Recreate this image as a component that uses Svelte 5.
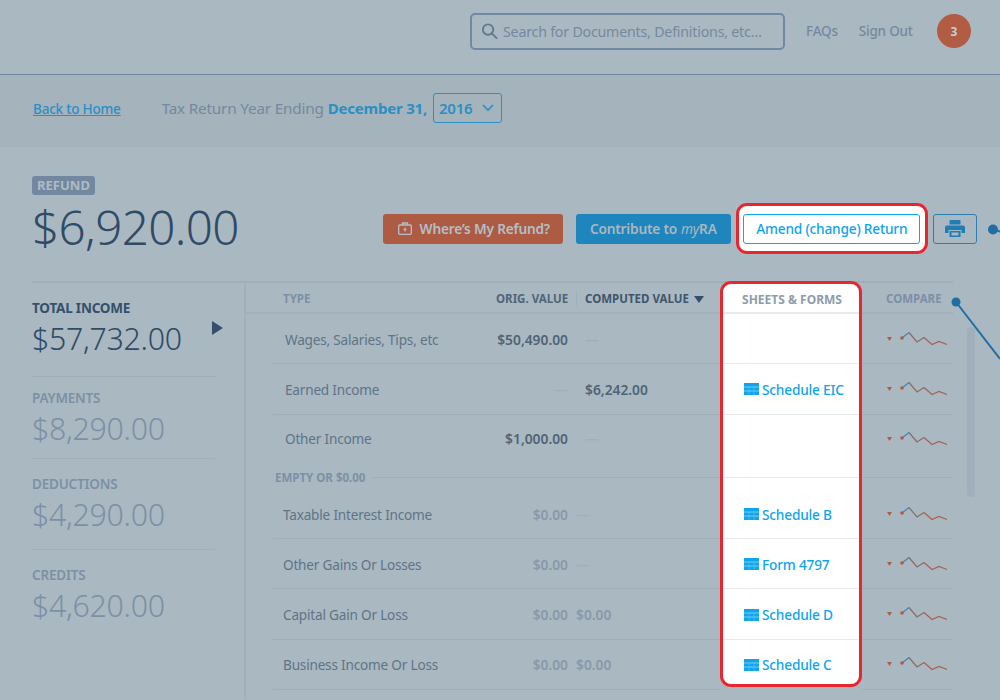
<script lang="ts">
  type Row = { name: string; orig: string; computed: string; sheet: string; muted?: boolean };

  const top: Row[] = [
    { name: 'Wages, Salaries, Tips, etc', orig: '$50,490.00', computed: '—', sheet: '' },
    { name: 'Earned Income', orig: '—', computed: '$6,242.00', sheet: 'Schedule EIC' },
    { name: 'Other Income', orig: '$1,000.00', computed: '—', sheet: '' }
  ];
  const empty: Row[] = [
    { name: 'Taxable Interest Income', orig: '$0.00', computed: '—', sheet: 'Schedule B', muted: true },
    { name: 'Other Gains Or Losses', orig: '$0.00', computed: '—', sheet: 'Form 4797', muted: true },
    { name: 'Capital Gain Or Loss', orig: '$0.00', computed: '$0.00', sheet: 'Schedule D', muted: true },
    { name: 'Business Income Or Loss', orig: '$0.00', computed: '$0.00', sheet: 'Schedule C', muted: true }
  ];
  const stats = [
    { label: 'TOTAL INCOME', value: '$57,732.00' },
    { label: 'PAYMENTS', value: '$8,290.00' },
    { label: 'DEDUCTIONS', value: '$4,290.00' },
    { label: 'CREDITS', value: '$4,620.00' }
  ];
</script>

{#snippet sparkline()}
  <svg class="spark" width="64" height="18" viewBox="0 0 64 18" fill="none">
    <path d="M1 7h5l-2.500 4z" fill="#b05c42" />
    <path d="M16 8l7-5.500" stroke="#3f86b4" stroke-width="1.200" />
    <path d="M23 2.500l8 9.500 7-4.500" stroke="#8a6a68" stroke-width="1.200" />
    <path d="M38 7.500l8 7 7-3 8 3" stroke="#a9614e" stroke-width="1.200" />
    <circle cx="16" cy="8" r="1.800" fill="#b05c42" />
  </svg>
{/snippet}

{#snippet tableIcon()}
  <svg class="grid-icon" width="15" height="12" viewBox="0 0 15 12">
    <path d="M0 0h15v12H0z" fill="#0ea5ec" />
    <path d="M0 4h15M0 8h15" stroke="#a5def9" stroke-width="0.700" />
    <path d="M5 4v8M10 4v8" stroke="#6cc8f5" stroke-width="0.500" />
  </svg>
{/snippet}

<div class="page">
  <header class="topbar">
    <div class="search">
      <svg width="17" height="18" viewBox="0 0 18 18" fill="none" stroke="#62798f" stroke-width="2">
        <circle cx="7.500" cy="7.500" r="5.500" />
        <path d="M11.500 11.500l5 5" stroke-linecap="round" />
      </svg>
      <span>Search for Documents, Definitions, etc…</span>
    </div>
    <a class="nav faq" href="#faq">FAQs</a>
    <a class="nav" href="#out">Sign Out</a>
    <span class="badge">3</span>
  </header>

  <div class="subbar">
    <a class="back" href="#home">Back to Home</a>
    <span class="year-label">Tax Return Year Ending</span>
    <strong class="year-date">December 31,</strong>
    <span class="year-select">
      2016
      <svg width="12" height="8" viewBox="0 0 12 8" fill="none" stroke="#2a8fc4" stroke-width="1.600">
        <path d="M1 1l5 5 5-5" />
      </svg>
    </span>
  </div>

  <main class="content">
    <section class="hero">
      <div class="refund">
        <span class="tag">REFUND</span>
        <div class="amount">$6,920.00</div>
      </div>
      <div class="actions">
        <button type="button" class="btn orange">
          <svg width="14" height="13" viewBox="0 0 14 13" fill="none" stroke="#b3bfc8" stroke-width="1.300">
            <rect x="0.700" y="3" width="12.600" height="9.300" rx="1" />
            <path d="M4.500 3V1h5v2" />
            <path d="M5.500 7.500h3M7 5.500v4" stroke-width="1.200" />
          </svg>
          Where’s My Refund?
        </button>
        <button type="button" class="btn blue">Contribute to <i>my</i>RA</button>
        <div class="spot-btn">
          <button type="button" class="btn amend">Amend (change) Return</button>
        </div>
        <button type="button" class="btn print" aria-label="Print">
          <svg width="20" height="17" viewBox="0 0 20 17">
            <path d="M5.500 0h9a1 1 0 0 1 1 1v3.500h-11V1a1 1 0 0 1 1-1z" fill="#1f7fb5" />
            <path d="M2 5.500h16a2 2 0 0 1 2 2V13h-3.500V10h-13v3H0V7.500a2 2 0 0 1 2-2z" fill="#1f7fb5" />
            <path d="M4.500 11h11v6h-11z" fill="#1f7fb5" />
            <path d="M6.500 12.500h7v3h-7z" fill="#aab8c2" />
          </svg>
        </button>
      </div>
    </section>

    <section class="body">
      <aside class="stats">
        {#each stats as s, i}
          <div class="stat" class:active={i === 0}>
            <div class="stat-label">{s.label}</div>
            <div class="stat-value">{s.value}</div>
            {#if i === 0}<span class="arrow"></span>{/if}
          </div>
        {/each}
      </aside>

      <div class="table">
        <div class="col main-col">
          <div class="head head-main">
            <span class="th-type">TYPE</span>
            <span class="th-orig">ORIG. VALUE</span>
            <span class="th-comp">COMPUTED VALUE <span class="caret"></span></span>
          </div>
          {#each top as r, i}
            <div class="row data" class:last={i === 2}>
              <span class="type">{r.name}</span>
              <span class="orig" class:dash={r.orig === '—'}>{r.orig}</span>
              <span class="comp" class:dash={r.computed === '—'}>{r.computed}</span>
            </div>
          {/each}
          <div class="group"><span>EMPTY OR $0.00</span></div>
          {#each empty as r}
            <div class="row data muted">
              <span class="type">{r.name}</span>
              <span class="orig">{r.orig}</span>
              <span class="comp" class:dash={r.computed === '—'}>{r.computed}</span>
            </div>
          {/each}
        </div>

        <div class="col sheets">
          <div class="head head-sheets">SHEETS &amp; FORMS</div>
          {#each top as r, i}
            <div class="row sheet" class:last={i === 2}>
              {#if r.sheet}{@render tableIcon()}<a href="#s">{r.sheet}</a>{/if}
            </div>
          {/each}
          <div class="group-gap"></div>
          {#each empty as r}
            <div class="row sheet">{@render tableIcon()}<a href="#s">{r.sheet}</a></div>
          {/each}
        </div>

        <div class="col compare">
          <div class="head head-compare">COMPARE</div>
          {#each top as r, i}
            <div class="row cmp" class:last={i === 2}>{@render sparkline()}</div>
          {/each}
          <div class="group-gap"></div>
          {#each empty as r}
            <div class="row cmp">{@render sparkline()}</div>
          {/each}
        </div>
      </div>
    </section>
  </main>

  <div class="scrollbar"></div>
  <svg class="callouts" width="1000" height="700" viewBox="0 0 1000 700" fill="none">
    <circle cx="993" cy="229.500" r="5" fill="#1f6fa3" />
    <path d="M993 229.500l7 2" stroke="#1f6fa3" stroke-width="2" />
    <circle cx="956" cy="302" r="4.500" fill="#1f6fa3" />
    <path d="M956 302l44 57" stroke="#1f6fa3" stroke-width="2" />
  </svg>
</div>

<style>
  :global(body) {
    margin: 0;
    background: #aab8c2;
  }
  .page {
    position: relative;
    width: 1000px;
    height: 700px;
    overflow: hidden;
    background: #aab8c2;
    font-family: "Noto Sans", "Open Sans", sans-serif;
    letter-spacing: -0.2px;
    color: #5f7486;
  }
  a {
    text-decoration: none;
  }

  .topbar {
    box-sizing: border-box;
    height: 75px;
    display: flex;
    align-items: center;
    padding: 0 29px 12px 470px;
    border-bottom: 1px solid #6f879c;
  }
  .search {
    box-sizing: border-box;
    width: 315px;
    height: 37px;
    display: flex;
    align-items: center;
    gap: 5px;
    padding-left: 9px;
    border: 2px solid #7189a0;
    border-radius: 5px;
    font-size: 14.200px;
    color: #7489a0;
  }
  .nav {
    font-size: 13.500px;
    font-weight: 500;
    color: #7489a0;
    margin-left: 21px;
  }
  .nav:not(.faq) {
    margin-right: 24px;
  }
  .badge {
    width: 34px;
    height: 34px;
    border-radius: 50%;
    background: #b25c43;
    color: #c4ced5;
    font-size: 12px;
    font-weight: 700;
    display: flex;
    align-items: center;
    justify-content: center;
  }

  .subbar {
    box-sizing: border-box;
    height: 72px;
    display: flex;
    align-items: center;
    padding: 0 0 5px 33px;
    background: #a5b3bc;
    border-bottom: 1px solid #9fb0bd;
  }
  .back {
    font-size: 13.500px;
    font-weight: 500;
    color: #2a8fc4;
    text-decoration: underline;
    margin: 2px 41px 0 0;
  }
  .year-label {
    font-size: 15.300px;
    color: #7489a0;
    margin-right: 4px;
  }
  .year-date {
    font-size: 15px;
    font-weight: 700;
    color: #2a8fc4;
    margin-right: 6px;
  }
  .year-select {
    box-sizing: border-box;
    width: 69px;
    height: 30px;
    display: inline-flex;
    align-items: center;
    gap: 9px;
    padding-left: 5px;
    border: 1px solid #2a8fc4;
    border-radius: 3px;
    font-size: 15px;
    font-weight: 600;
    color: #2a8fc4;
  }

  .content {
    padding: 29px 0 0 32px;
  }
  .hero {
    height: 105px;
    display: flex;
    align-items: flex-start;
  }
  .tag {
    display: block;
    box-sizing: border-box;
    width: 63px;
    height: 19px;
    line-height: 18px;
    text-align: center;
    background: #7288a0;
    color: #aebbc5;
    border-radius: 3px;
    font-size: 13px;
    font-weight: 700;
    letter-spacing: 0;
  }
  .amount {
    font-size: 47.500px;
    font-weight: 300;
    line-height: 64px;
    letter-spacing: -0.600px;
    color: #2f4b65;
  }
  .actions {
    margin: 27px 0 0 144px;
    display: flex;
    align-items: center;
  }
  .btn {
    box-sizing: border-box;
    height: 30px;
    border: 0;
    border-radius: 3px;
    padding: 0;
    font-family: inherit;
    font-size: 13.700px;
    font-weight: 600;
    letter-spacing: -0.2px;
    display: flex;
    align-items: center;
    justify-content: center;
    gap: 7px;
  }
  .orange {
    width: 180px;
    padding-left: 2px;
    gap: 8px;
    background: #ad5c43;
    color: #b3bfc8;
  }
  .blue {
    width: 155px;
    margin-left: 13px;
    gap: 4px;
    background: #1f86bd;
    color: #a9b7c1;
  }
  .blue i {
    font-weight: 400;
    margin-right: -4px;
  }
  .spot-btn {
    box-sizing: border-box;
    width: 192px;
    height: 51px;
    margin-left: 5px;
    display: flex;
    align-items: center;
    justify-content: center;
    background: #fff;
    border: 3px solid #e8262d;
    border-radius: 11px;
  }
  .amend {
    width: 177px;
    background: #fff;
    color: #0ea5ec;
    border: 1px solid #0ea5ec;
    font-weight: 500;
  }
  .print {
    width: 44px;
    margin-left: 5px;
    background: transparent;
    border: 1px solid #2a7fb0;
  }

  .body {
    display: flex;
    height: 418px;
    width: 921px;
    border-top: 2px solid #9fb0bd;
    box-sizing: border-box;
  }
  .stats {
    box-sizing: border-box;
    width: 214px;
    padding-right: 29px;
    border-right: 2px solid #a0b1be;
  }
  .stat {
    position: relative;
    padding: 16px 0;
    border-bottom: 1px solid #9fb0bd;
  }
  .stat:nth-child(2) {
    padding-top: 12px;
    padding-bottom: 8px;
  }
  .stat:nth-child(3) {
    padding-bottom: 13px;
  }
  .stat:last-child {
    border-bottom: 0;
  }
  .stat-label {
    font-size: 13.500px;
    font-weight: 600;
    line-height: 19px;
    color: #7c90a5;
  }
  .stat-value {
    font-size: 30.300px;
    font-weight: 300;
    line-height: 42px;
    letter-spacing: -0.300px;
    color: #7c90a5;
  }
  .active .stat-label {
    font-weight: 700;
    color: #34506a;
  }
  .active .stat-value {
    color: #2f4b65;
  }
  .arrow {
    position: absolute;
    right: -8px;
    top: 38px;
    border-left: 11px solid #34506a;
    border-top: 7px solid transparent;
    border-bottom: 7px solid transparent;
  }

  .table {
    display: flex;
    flex: 1;
  }
  .col {
    flex: none;
  }
  .main-col {
    width: 474px;
  }
  .sheets {
    position: relative;
    z-index: 1;
    box-sizing: border-box;
    width: 142px;
    height: 406px;
    margin-top: -2px;
    overflow: hidden;
    background: #fff;
    border: 3px solid #e8262d;
    border-radius: 11px;
  }
  .compare {
    width: 91px;
  }
  .head {
    box-sizing: border-box;
    height: 31px;
    padding-top: 2px;
    font-size: 11.500px;
    font-weight: 700;
    letter-spacing: 0;
    border-bottom: 2px solid #a0b1be;
    display: flex;
    align-items: center;
  }
  .th-type {
    margin-left: 37px;
    width: 213px;
    color: #7c90a5;
  }
  .th-orig {
    width: 72px;
    text-align: right;
    white-space: nowrap;
    color: #506678;
    padding-right: 8px;
    border-right: 1px solid #9fb0bd;
  }
  .th-comp {
    margin-left: 8px;
    white-space: nowrap;
    color: #3f566b;
  }
  .caret {
    display: inline-block;
    margin-left: 2px;
    border-top: 7px solid #34506a;
    border-left: 5px solid transparent;
    border-right: 5px solid transparent;
  }
  .head-sheets {
    height: 30px;
    padding-left: 2px;
    justify-content: center;
    font-size: 12px;
    color: #8c9cac;
    border-bottom-color: #e6ebef;
  }
  .head-compare {
    padding-left: 24px;
    color: #7c90a5;
  }

  .row {
    box-sizing: border-box;
    height: 50.300px;
    border-bottom: 1px solid #9fb0bd;
  }
  .row.last {
    border-bottom-color: transparent;
  }
  .data {
    margin-left: 27px;
    display: grid;
    grid-template-columns: 1fr 100px 152px;
    align-items: center;
    font-size: 13.600px;
    padding-top: 2px;
  }
  .data.last {
    padding: 0 0 1px;
  }
  .data.muted {
    padding-top: 1px;
  }
  .type {
    padding-left: 12px;
  }
  .muted .type {
    padding-left: 10px;
  }
  .orig,
  .comp {
    font-size: 13.800px;
    font-weight: 600;
    letter-spacing: 0;
    color: #4f6475;
  }
  .orig {
    text-align: right;
  }
  .comp {
    padding-left: 17px;
  }
  .muted .orig,
  .muted .comp {
    color: #8799a9;
  }
  .muted .comp {
    padding-left: 8px;
  }
  .data .dash,
  .muted .dash {
    font-weight: 400;
    color: #9fb0bd;
  }
  .group {
    height: 24px;
    margin-left: 29px;
    font-size: 11.500px;
    font-weight: 700;
    letter-spacing: 0;
    color: #7c90a5;
  }
  .group span {
    display: flex;
    align-items: center;
    gap: 7px;
    height: 25px;
    white-space: nowrap;
  }
  .group span::after {
    content: "";
    flex: 1;
    border-top: 1px solid #9fb0bd;
  }
  .sheet {
    display: flex;
    align-items: center;
    gap: 3px;
    padding: 1px 0 0 21px;
    border-bottom-color: #e6ebef;
    font-size: 13.700px;
    font-weight: 500;
  }
  .sheet a {
    color: #0ea5ec;
  }
  .group-gap {
    box-sizing: border-box;
    height: 13px;
    margin-bottom: 11px;
    border-bottom: 1px solid #9fb0bd;
  }
  .sheets .group-gap {
    border-bottom-color: #e6ebef;
  }
  .cmp {
    display: flex;
    align-items: center;
    padding-left: 24px;
  }
  .scrollbar {
    position: absolute;
    left: 967px;
    top: 327px;
    width: 8px;
    height: 170px;
    border-radius: 4px;
    background: #a0afbb;
  }
  .callouts {
    position: absolute;
    left: 0;
    top: 0;
    pointer-events: none;
  }
</style>
